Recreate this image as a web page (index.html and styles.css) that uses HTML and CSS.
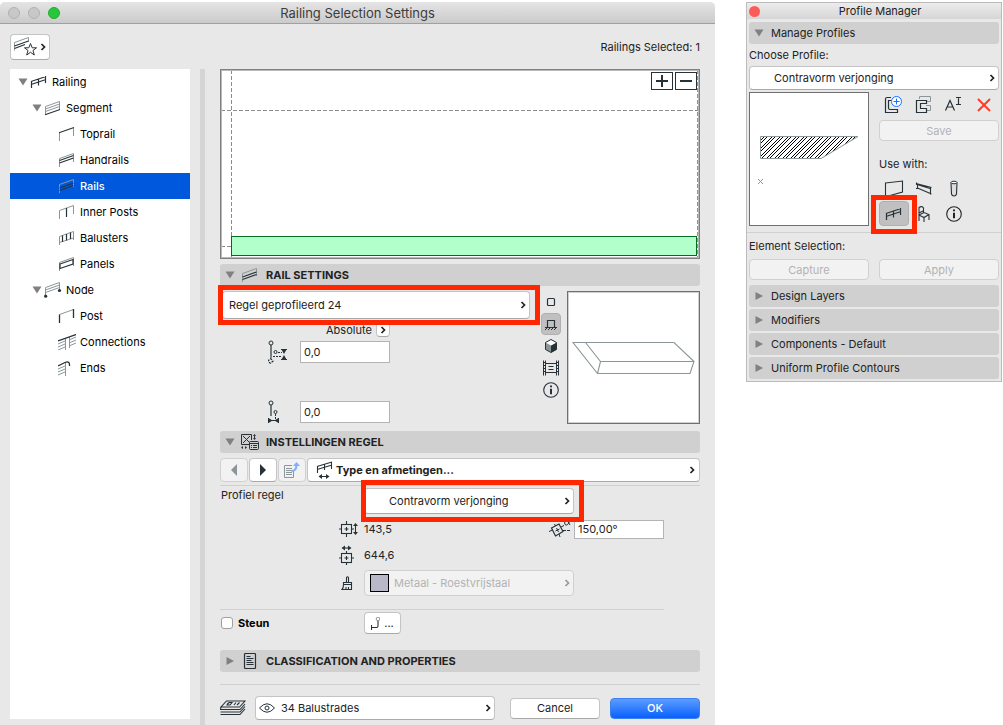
FILE: index.html
```html
<!DOCTYPE html>
<html lang="en">
<head>
  <meta charset="UTF-8">
  <meta name="viewport" content="width=device-width, initial-scale=1.0">
  <title>Railing Selection Settings</title>
  <link rel="stylesheet" href="styles.css">
</head>
<body>

  <!-- Shared icons -->
  <svg class="sprite" aria-hidden="true">
    <symbol id="chevron" viewBox="0 0 6 8"><path d="M1.5 1L4.5 4L1.5 7" fill="none" stroke="currentColor" stroke-width="1.7"/></symbol>
    <symbol id="down" viewBox="0 0 10 8"><path d="M0.5 0.5H9.5L5 7.5Z" fill="currentColor"/></symbol>
    <symbol id="right" viewBox="0 0 10 8"><path d="M1.5 0L9 4L1.5 8Z" fill="currentColor"/></symbol>
    <symbol id="railing" viewBox="0 0 18 16"><path d="M1.5 7V14M15.5 2V9M1 7.5L16 2.5M1 10.5L16 5.5M8.5 5V11.5" fill="none" stroke="currentColor" stroke-width="1.2"/></symbol>
    <symbol id="rails" viewBox="0 0 18 16"><path d="M1.5 15V6.5L15.5 1.5V9" fill="none" stroke="#8b9699"/><path d="M1.5 10L15.5 5M1.5 12.5L15.5 7.5" fill="none" stroke="#263238" stroke-width="1.2"/></symbol>
    <symbol id="info" viewBox="0 0 16 16"><circle cx="8" cy="8" r="7.3" fill="none" stroke="currentColor" stroke-width="1.1"/><path d="M8 3.5V5.3M8 6.7V12.3" stroke="currentColor" stroke-width="2"/></symbol>
  </svg>

  <div class="desktop">

    <main class="window">
      <header class="titlebar">
        <div class="lights"><span></span><span></span><span class="green"></span></div>
        <h1>Railing Selection Settings</h1>
      </header>

      <div class="toolbar">
        <button class="btn favorite" aria-label="Favorites">
          <svg width="23" height="20" viewBox="0 0 23 20"><path d="M0.5 13.5V5.5L14.5 0.5V5" fill="none" stroke="#8b9699"/><path d="M0.5 9L14.5 4M0.5 11.5L11 7.5" fill="none" stroke="#263238" stroke-width="1.2"/><path d="M16.500 6.500L18.200 10.800H22.500L19 13.500L20.300 18L16.500 15.300L12.700 18L14 13.500L10.500 10.800H14.800Z" fill="#fff" stroke="#263238"/></svg>
          <svg class="chev"><use href="#chevron"/></svg>
        </button>
        <span>Railings Selected: 1</span>
      </div>

      <div class="columns">
        <nav class="tree">
          <button class="node"><svg class="arrow"><use href="#down"/></svg><svg class="icon"><use href="#railing"/></svg>Railing</button>
          <button class="node level1"><svg class="arrow"><use href="#down"/></svg>
            <svg class="icon" viewBox="0 0 18 16"><path d="M1.5 15V6.5L15.5 1.500V10M1.5 9L15.5 4M1.5 11.5L15.5 6.500" fill="none" stroke="#8b9699"/><path d="M1 14.800L16 9.500" stroke="#263238" stroke-width="1.2"/></svg>Segment</button>
          <button class="node level2"><svg class="icon" viewBox="0 0 18 16"><path d="M1.5 15V7M15.5 2V10" stroke="#8b9699"/><path d="M1 6.800L16 1.500" stroke="#263238" stroke-width="1.2"/></svg>Toprail</button>
          <button class="node level2"><svg class="icon" viewBox="0 0 18 16"><path d="M1.5 15V6.500L15.5 1.500V10" fill="none" stroke="#8b9699"/><path d="M1.5 8.500L15.5 3.500M1.5 11L15.5 6" stroke="#263238" stroke-width="1.2"/></svg>Handrails</button>
          <button class="node level2 selected"><svg class="icon"><use href="#rails"/></svg>Rails</button>
          <button class="node level2"><svg class="icon" viewBox="0 0 18 16"><path d="M1.5 15V6.500L15.5 1.500V10" fill="none" stroke="#8b9699"/><path d="M8.500 4V13" stroke="#263238" stroke-width="1.2"/></svg>Inner Posts</button>
          <button class="node level2"><svg class="icon" viewBox="0 0 18 16"><path d="M1.5 15V6.500L15.5 1.500V10M1.5 12.500L15.5 8" fill="none" stroke="#8b9699"/><path d="M4.500 5.500V12M8.500 4V10.500M12.500 2.500V9" stroke="#263238" stroke-width="1.200"/></svg>Balusters</button>
          <button class="node level2"><svg class="icon" viewBox="0 0 18 16"><path d="M1.5 15V6.500L15.5 1.500V10" fill="none" stroke="#8b9699"/><path d="M2 8L15 3.500V8L2 12.500Z" fill="none" stroke="#263238" stroke-width="1.200"/></svg>Panels</button>
          <button class="node level1"><svg class="arrow"><use href="#down"/></svg>
            <svg class="icon" viewBox="0 0 18 16"><path d="M1.5 14V5.500L15.5 0.500V9M1.5 8L15.5 3M1.5 10.500L15.5 5.500" fill="none" stroke="#8b9699"/><circle cx="1.700" cy="14.200" r="1.600" fill="#263238"/><circle cx="15.500" cy="8.500" r="1.600" fill="#263238"/></svg>Node</button>
          <button class="node level2"><svg class="icon" viewBox="0 0 18 16"><path d="M1.5 6.500L15.5 1.500" stroke="#8b9699"/><path d="M1.5 15V6.500M15.5 1V10" stroke="#263238" stroke-width="1.300"/></svg>Post</button>
          <button class="node level2"><svg class="icon" viewBox="0 0 18 16"><path d="M7.500 4V16M11.500 3V14M0 10L7 7M0 13L7 10M0 16L7 13M11 6L18 3M11 9L18 6M11 12L18 9" stroke="#8b9699"/><path d="M0 7L18 0.500" stroke="#263238" stroke-width="1.200"/></svg>Connections</button>
          <button class="node level2"><svg class="icon" viewBox="0 0 18 16"><path d="M7.500 3V16M0 9L7 6M0 12L7 9M0 15L7 12" stroke="#8b9699"/><path d="M0 6L7 2.500Q12 0.500 11.500 6" fill="none" stroke="#263238" stroke-width="1.300"/></svg>Ends</button>
        </nav>

        <div class="splitter"></div>

        <div class="content">
          <div class="canvas">
            <svg class="plan">
              <line class="dash" x1="10.5" y1="0" x2="10.5" y2="100%"/>
              <line class="dash" x1="0" y1="40.5" x2="100%" y2="40.5"/>
              <line class="dash" x1="99.7%" y1="0" x2="99.7%" y2="100%"/>
              <line class="dash" x1="0" y1="176.5" x2="10" y2="176.5"/>
              <rect class="rail" x="10.5" y="166.5"/>
            </svg>
            <div class="zoom">
              <button aria-label="Zoom in"><svg viewBox="0 0 12 12"><path d="M0 6H12M6 0V12" stroke="#263238" stroke-width="2"/></svg></button>
              <button aria-label="Zoom out"><svg viewBox="0 0 12 12"><path d="M0 6H12" stroke="#263238" stroke-width="2"/></svg></button>
            </div>
          </div>

          <button class="section"><svg class="arrow"><use href="#down"/></svg><svg class="icon"><use href="#rails"/></svg>RAIL SETTINGS</button>

          <div class="rail-settings">
            <div class="fields">
              <div class="marked">
                <div class="combo tall">
                  <select aria-label="Rail type"><option>Regel geprofileerd 24</option></select>
                  <svg class="chev"><use href="#chevron"/></svg>
                </div>
              </div>
              <div class="absolute-row">Absolute <button class="btn mini" aria-label="Absolute or relative"><svg class="chev"><use href="#chevron"/></svg></button></div>
              <label class="offset">
                <svg width="20" height="24" viewBox="0 0 20 24"><g fill="none" stroke="#263238"><circle cx="3" cy="3" r="2"/><path d="M3 5V16" stroke-width="1.200"/><circle cx="7.500" cy="12" r="1.500"/><path d="M10 12.500H14M5 16.500H14M3 16V18" stroke-dasharray="2 1"/><path d="M13 9.500H19M13 19.500H19"/><path d="M2.500 18.500L5 21L2.500 23.500L0 21Z" stroke-width="1.300" stroke-dasharray="2 1.500"/></g><path d="M13.500 9.500H18.500L16 14ZM13.500 19.500H18.500L16 15Z" fill="#263238"/></svg>
                <input type="text" value="0,0" aria-label="Vertical offset">
              </label>
              <label class="offset second">
                <svg width="20" height="24" viewBox="0 0 20 24"><g fill="none" stroke="#263238"><circle cx="3" cy="3" r="2"/><path d="M3 5V16" stroke-width="1.200"/><circle cx="7.500" cy="12" r="1.500"/><path d="M7.500 14V19" stroke-dasharray="2 1"/><path d="M0.500 18V23M10.500 18V23M1 20.500H10"/></g><path d="M0.500 18V23L4.500 20.500ZM10.500 18V23L6.500 20.500Z" fill="#263238"/></svg>
                <input type="text" value="0,0" aria-label="Horizontal offset">
              </label>
            </div>
            <div class="views">
              <button aria-label="2D view"><svg viewBox="0 0 16 16"><rect x="4.500" y="4.500" width="7" height="7" rx="1" fill="none" stroke="currentColor" stroke-width="1.200"/></svg></button>
              <button class="on" aria-label="Front view"><svg viewBox="0 0 16 16"><path d="M4.500 11V4.500H11.500V11M2 11.500H14" fill="none" stroke="currentColor" stroke-width="1.200"/><path d="M2 14L4 12M5 14L7 12M8 14L10 12M11 14L13 12" stroke="currentColor"/></svg></button>
              <button aria-label="3D view"><svg viewBox="0 0 16 16"><path d="M8 1.500L13.500 4.500V11.500L8 14.500L2.500 11.500V4.500Z" fill="#8b9699"/><path d="M8 7.500L13.500 4.500V11.500L8 14.500Z" fill="#263238"/><path d="M8 1.500L13.500 4.500L8 7.500L2.500 4.500Z" fill="#fff"/><path d="M8 1.500L13.500 4.500V11.500L8 14.500L2.500 11.500V4.500Z" fill="none" stroke="#263238"/></svg></button>
              <button aria-label="Picture"><svg viewBox="0 0 16 16"><path d="M0.500 0.500V15.500M2.500 0.500V15.500M13.500 0.500V15.500M15.500 0.500V15.500M2.500 3.500H13.500M2.500 12.500H13.500M5.500 6.500H10.500M5.500 9.500H10.500M0 2.500H3M0 5.500H3M0 8.500H3M0 11.500H3M13 2.500H16M13 5.500H16M13 8.500H16M13 11.500H16" fill="none" stroke="currentColor"/></svg></button>
              <button aria-label="Info"><svg><use href="#info"/></svg></button>
            </div>
            <div class="preview3d">
              <svg viewBox="0 0 129 129"><path d="M4 49.500H105L125 68.500L121 80.500H28.500ZM125 68.500H31.500L16.500 49.500M31.500 68.500L28.500 80.500" fill="none" stroke="#8b9699" stroke-width="1.100"/></svg>
            </div>
          </div>

          <button class="section"><svg class="arrow"><use href="#down"/></svg>
            <svg class="icon" viewBox="0 0 18 16"><g fill="none" stroke="#263238"><path d="M8 10.500H0.500V0.500H10.500V6M2 2L9 9M9 2L2 9M13.500 1V5"/><rect x="8.500" y="7.500" width="9" height="8" rx="1" fill="#d0d0d0"/><path d="M8.500 9.500H17.500M10 11.500H11M12 11.500H16M10 13.500H11M12 13.500H16"/></g><path d="M12 2L13.500 0L15 2ZM12 4L13.500 6L15 4ZM2 12V15L0 13.500ZM4 12V15L6 13.500Z" fill="#263238"/></svg>INSTELLINGEN REGEL</button>

          <div class="pager">
            <button class="btn dim" aria-label="Previous"><svg width="6" height="12" viewBox="0 0 6 12"><path d="M6 0V12L0 6Z" fill="#8b9699"/></svg></button>
            <button class="btn" aria-label="Next"><svg width="6" height="12" viewBox="0 0 6 12"><path d="M0 0V12L6 6Z" fill="#263238"/></svg></button>
            <button class="btn dim" aria-label="Open page"><svg width="16" height="16" viewBox="0 0 16 16"><path d="M8 3.500H0.500V15.500H9.500V9M2 6.500H8M2 8.500H8M2 10.500H8M2 12.500H8" fill="none" stroke="#8b9699"/><path d="M7.500 9Q12.500 9 12.500 3" fill="none" stroke="#7fb0ff" stroke-width="2"/><path d="M9 4L12.500 0L16 4Z" fill="#7fb0ff"/></svg></button>
            <button class="btn type"><svg width="18" height="18" viewBox="0 0 18 18"><path d="M1.500 5.500V12M15.500 1V8M1 5.500L16 1M1 8.500L16 4M8.500 3V9M3 15.500H13" fill="none" stroke="#263238" stroke-width="1.100"/><path d="M6 13V18L2.500 15.500ZM10 13V18L13.500 15.500Z" fill="#263238"/></svg>Type en afmetingen...<svg class="chev"><use href="#chevron"/></svg></button>
          </div>

          <div class="profile">
            <label class="name" for="profiel">Profiel regel</label>
            <div class="marked inner">
              <div class="combo indented">
                <select id="profiel"><option>Contravorm verjonging</option></select>
                <svg class="chev"><use href="#chevron"/></svg>
              </div>
            </div>

            <svg class="dim-icon" width="20" height="16" viewBox="0 0 20 16"><g fill="none" stroke="#263238" stroke-width="1.100"><rect x="2.500" y="3.500" width="10" height="9"/><path d="M7.500 0V3M7.500 13V16M0 8H2M13 8H15M5.500 8H9.500M7.500 6V10"/><path d="M16.500 4V12"/></g><path d="M14 5L16.500 2L19 5ZM14 11L16.500 14L19 11Z" fill="#263238"/></svg>
            <div class="value">143,5
              <svg width="22" height="18" viewBox="0 0 22 18"><g fill="none" stroke="#263238"><path d="M2.500 8L10 4L14 11.500L6.500 16Z" stroke-width="1.200"/><path d="M0 11.500L4 9.800M12 7L15 5.500M5.500 4L6.500 6M10 14L11 17M6.500 11L10.500 9M7.500 8L9.500 12"/><path d="M14 10.500H22" stroke-dasharray="3 1"/><path d="M21 0Q19 6 16.500 5Q14.500 3 16.500 1Q19 0 21 5"/></g></svg>
            </div>
            <input class="angle" type="text" value="150,00°" aria-label="Angle">

            <svg class="dim-icon" width="16" height="20" viewBox="0 0 16 20"><g fill="none" stroke="#263238" stroke-width="1.100"><rect x="2.500" y="8.500" width="10" height="9"/><path d="M7.500 6V8M7.500 18V20M0 13H2M13 13H15M5.500 13H9.500M7.500 11V15"/><path d="M4 3H11"/></g><path d="M6 0.500V5.500L2.500 3ZM9 0.500V5.500L12.500 3Z" fill="#263238"/></svg>
            <div class="value">644,6</div>

            <svg class="dim-icon brush" width="12" height="14" viewBox="0 0 12 14"><path d="M5.500 6V1.500Q6.500 0 7.500 1.500V6M2.500 9V6.500H10.500V9M2.500 8.500H10.500V13.500H1Q2.500 12 2.500 8.500M5 13V11M7.500 13V11" fill="none" stroke="#263238" stroke-width="1.100"/></svg>
            <div class="combo material">
              <span class="swatch"></span>
              <select disabled aria-label="Material"><option>Metaal - Roestvrijstaal</option></select>
              <svg class="chev"><use href="#chevron"/></svg>
            </div>
          </div>

          <div class="support">
            <label><input type="checkbox">Steun</label>
            <button class="btn" aria-label="Support settings"><svg width="9" height="13" viewBox="0 0 9 13"><circle cx="7" cy="2" r="1.800" fill="none" stroke="#8b9699"/><path d="M7 4V9Q7 10.500 5.500 10.500H0.500M0.500 8V13" fill="none" stroke="#263238" stroke-width="1.100"/></svg>...</button>
          </div>

          <button class="section"><svg class="arrow"><use href="#right"/></svg>
            <svg class="icon" viewBox="0 0 18 16"><rect x="3.500" y="0.500" width="11" height="15" rx="1" fill="none" stroke="#263238" stroke-width="1.200"/><path d="M5.500 3.500H9.500M5.500 5.500H12.500M5.500 7.500H10.500M5.500 9.500H12.500M5.500 11.500H12.500" stroke="#263238"/></svg>CLASSIFICATION AND PROPERTIES</button>

          <footer class="footer">
            <svg width="26" height="16" viewBox="0 0 26 16"><path d="M6.500 1H25L19.500 7H1ZM1 7L0.500 9.500H20L25 4M0.500 12H20L25 6.500M0.500 14.500H20L25 9M7 4.500L9 2.500H12L10 5H6.500M14 5L16 2.500M17 5L19.500 2.500" fill="none" stroke="#263238" stroke-width="1.100"/></svg>
            <div class="combo layer">
              <svg class="eye" width="16" height="10" viewBox="0 0 16 10"><path d="M0.500 5Q8-3.500 15.500 5Q8 13.500 0.500 5Z" fill="none" stroke="#263238"/><circle cx="8" cy="5" r="2" fill="none" stroke="#263238"/></svg>
              <select aria-label="Layer"><option>34 Balustrades</option></select>
              <svg class="chev"><use href="#chevron"/></svg>
            </div>
            <div class="answers">
              <button class="btn">Cancel</button>
              <button class="btn primary">OK</button>
            </div>
          </footer>
        </div>
      </div>
    </main>

    <aside class="palette">
      <header><span class="close"></span><h2>Profile Manager</h2></header>
      <button class="section"><svg class="arrow"><use href="#down"/></svg>Manage Profiles</button>
      <label class="caption" for="choose">Choose Profile:</label>
      <div class="combo indented">
        <select id="choose"><option>Contravorm verjonging</option></select>
        <svg class="chev"><use href="#chevron"/></svg>
      </div>

      <div class="manage">
        <div class="section-view">
          <svg viewBox="0 0 116 130">
            <defs>
              <pattern id="hatch" width="8" height="8" patternUnits="userSpaceOnUse"><path d="M-1 1L1-1M-1 9L9-1M7 9L9 7M-1 4L4-1M2 9L9 2" stroke="#000"/></pattern>
            </defs>
            <path d="M9.500 42.500H107L70 64.500H9.500Z" fill="url(#hatch)" stroke="#8b9699"/>
            <path d="M7 85L12 90M12 85L7 90" stroke="#8b9699"/>
          </svg>
        </div>
        <div class="actions">
          <div class="tools">
            <button aria-label="New profile"><svg viewBox="0 0 20 20"><path d="M8 2.500H4Q2.500 2.500 2.500 4V17.500H14.500V14.500H7Q5.500 14.500 5.500 13V5.500H8" fill="none" stroke="#263238" stroke-width="1.200"/><circle cx="13.500" cy="6.500" r="5" fill="#fff" stroke="#1a6dff"/><path d="M10.500 6.500H16.500M13.500 3.500V9.500" stroke="#1a6dff"/></svg></button>
            <button aria-label="Duplicate profile"><svg viewBox="0 0 20 20"><path d="M6.500 4V1.500H17.500V6.500H13M13 10.500H17.500V15.500H14" fill="none" stroke="#8b9699"/><path d="M13.500 5.500V8.500H7.500V13.500H13.500V17.500H3.500V5.500Z" fill="none" stroke="#263238" stroke-width="1.200"/></svg></button>
            <button aria-label="Rename profile"><svg viewBox="0 0 20 20"><path d="M1.500 15.500L6 5.500L10.500 15.500M3 12H9M12 2.500H14L14.500 3L15 2.500H17M14.500 3V9M12 9.500H17" fill="none" stroke="#263238" stroke-width="1.200"/></svg></button>
            <button aria-label="Delete profile"><svg viewBox="0 0 20 20"><path d="M4 4L16 16M16 4L4 16" stroke="#ff3b24" stroke-width="2"/></svg></button>
          </div>
          <button class="btn" disabled>Save</button>
          <p>Use with:</p>
          <div class="uses">
            <button aria-label="Wall"><svg viewBox="0 0 20 20"><path d="M1.500 4L18.500 2V13L6 16.500H1.500Z" fill="none" stroke="#263238" stroke-width="1.100"/></svg></button>
            <button aria-label="Beam"><svg viewBox="0 0 20 20"><path d="M2 4.500L17.500 8.500M3.500 9L17.500 15M2.500 3.500V6M3.500 5V10M2 9.500H4M16.500 8V15.500M3 5.500L16 9.500" fill="none" stroke="#263238" stroke-width="1.100"/></svg></button>
            <button aria-label="Column"><svg viewBox="0 0 20 20"><path d="M7 3.500L7.500 15Q8 17 10 17T12.500 15L13 3.500" fill="#ddd" stroke="#263238" stroke-width="1.100"/><ellipse cx="10" cy="3.500" rx="3" ry="1.300" fill="#fff" stroke="#263238"/></svg></button>
            <button class="on marked small" aria-label="Railing"><svg viewBox="-1 -2 20 20"><path d="M1.500 7V14M15.500 2V9M1 7.500L16 2.500M1 10.500L16 5.500M8.500 5V11.500" fill="none" stroke="#263238" stroke-width="1.200"/></svg></button>
            <button aria-label="Object"><svg viewBox="0 0 20 20"><path d="M5 17V3.500Q8 1.500 9.500 4V8.500M5 11L10 8.500L15 10.500V16M5 11L10 13.500L15 10.500M10 13.500V18M5 9L9 7" fill="none" stroke="#263238" stroke-width="1.100"/></svg></button>
            <button aria-label="Profile info"><svg viewBox="0 0 20 20"><use href="#info" x="2" y="2" width="16" height="16"/></svg></button>
          </div>
        </div>
      </div>

      <div class="selection">
        <p>Element Selection:</p>
        <div class="pair">
          <button class="btn" disabled>Capture</button>
          <button class="btn" disabled>Apply</button>
        </div>
      </div>
      <div class="closed">
        <button class="section"><svg class="arrow"><use href="#right"/></svg>Design Layers</button>
        <button class="section"><svg class="arrow"><use href="#right"/></svg>Modifiers</button>
        <button class="section"><svg class="arrow"><use href="#right"/></svg>Components - Default</button>
        <button class="section"><svg class="arrow"><use href="#right"/></svg>Uniform Profile Contours</button>
      </div>
    </aside>

  </div>

</body>
</html>
```
FILE: styles.css
```css
* {
  box-sizing: border-box;
}
body {
  margin: 0;
  background: #fff;
  color: #222;
  font-family: Inter, "Liberation Sans", sans-serif;
  font-size: 11px;
  line-height: 14px;
}
button, input, select {
  font: inherit;
  color: inherit;
  margin: 0;
}
button {
  display: flex;
  align-items: center;
  border: none;
  padding: 0;
  background: none;
  text-align: left;
}
svg {
  display: block;
  flex: none;
}
h1, h2, p {
  margin: 0;
  font-weight: normal;
}
.sprite {
  position: absolute;
  width: 0;
  height: 0;
}
.desktop {
  display: flex;
  align-items: flex-start;
  gap: 31px;
  padding: 2px 1px 0 0;
}

/* Settings window */
.window {
  flex: 1;
  display: flex;
  flex-direction: column;
  min-height: calc(100vh - 2px);
  background: #e8e8e8;
  border-radius: 5px 5px 0 0;
}
.titlebar {
  display: grid;
  grid-template-columns: 60px 1fr 60px;
  align-items: center;
  height: 22px;
  background: linear-gradient(#e4e4e4, #cbcbcb);
  border-bottom: 1px solid #a0a0a0;
  border-radius: 5px 5px 0 0;
}
.titlebar h1 {
  font-size: 13px;
  text-align: center;
  color: #3c3c3c;
}
.lights {
  display: flex;
  gap: 8px;
  padding-left: 8px;
}
.lights span {
  width: 12px;
  height: 12px;
  border: 1px solid #b1b1b1;
  border-radius: 50%;
  background: #c8c8c8;
}
.lights .green {
  background: #28c73b;
  border-color: #1fae30;
}
.toolbar {
  display: flex;
  justify-content: space-between;
  align-items: center;
  height: 45px;
  padding: 0 15px 0 10px;
}
.columns {
  flex: 1;
  display: grid;
  grid-template-columns: 180px 5px 1fr;
  column-gap: 10px;
  padding-left: 10px;
}
.splitter {
  background: #d5d5d5;
}
.content {
  padding: 0 15px 6px 5px;
}

/* Buttons and boxes */
.btn {
  justify-content: center;
  background: #fff;
  border: 1px solid #c4c4c4;
  border-bottom-color: #a9a9a9;
  border-radius: 4px;
}
.btn:disabled, .btn.dim {
  background: #f2f2f2;
  border-color: #d0d0d0;
  color: #b2b2b2;
}
.favorite {
  width: 40px;
  height: 26px;
  gap: 3px;
}
.chev {
  width: 6px;
  height: 8px;
}
.arrow {
  width: 10px;
  height: 8px;
  color: #808080;
}
.icon {
  width: 18px;
  height: 16px;
}
input[type="text"] {
  width: 90px;
  height: 22px;
  padding: 0 3px;
  border: 1px solid #b4b4b4;
  background: #fff;
}
.combo {
  position: relative;
  height: 24px;
}
.combo select {
  appearance: none;
  width: 100%;
  height: 100%;
  padding: 0 20px 0 6px;
  background: #fff;
  border: 1px solid #c4c4c4;
  border-bottom-color: #a9a9a9;
  border-radius: 4px;
}
.combo.tall {
  height: 28px;
}
.combo.indented select {
  padding-left: 24px;
}
.combo .chev {
  position: absolute;
  right: 4px;
  top: calc(50% - 4px);
}
.marked {
  position: relative;
}
.marked::after {
  content: "";
  position: absolute;
  inset: -6px -10px -6px -4px;
  border: 5px solid #ff2600;
  pointer-events: none;
}

/* Tree */
.tree {
  margin-bottom: 7px;
  background: #fff;
}
.node {
  width: 100%;
  height: 26px;
  padding-left: 8px;
  color: #000;
}
.node .arrow {
  margin-right: 2px;
}
.node .icon {
  margin-right: 4px;
  color: #263238;
}
.level1 {
  padding-left: 22px;
}
.level2 {
  padding-left: 48px;
}
.node.selected {
  background: #0058dc;
  color: #fff;
  font-weight: 500;
}

/* Section headers */
.section {
  width: 100%;
  height: 22px;
  padding-left: 5px;
  background: #d0d0d0;
  border-radius: 3px;
}
.content .section {
  font-weight: 700;
}
.section .icon {
  margin: 0 7px 0 6px;
}

/* Plan */
.canvas {
  position: relative;
  height: 190px;
  margin-bottom: 5px;
  border: 1px solid #808080;
  outline: 1px solid #b9b9b9;
  outline-offset: -2px;
  background: #fff;
}
.plan {
  width: 100%;
  height: 100%;
}
.dash {
  stroke: #8c8c8c;
  stroke-dasharray: 4 2;
}
.rail {
  width: calc(100% - 13px);
  height: 19px;
  fill: #b2ffcc;
  stroke: #006d20;
}
.zoom {
  position: absolute;
  top: 2px;
  right: 2px;
  display: flex;
  gap: 2px;
}
.zoom button {
  justify-content: center;
  width: 22px;
  height: 18px;
  background: #fff;
  border: 1px solid #263238;
}
.zoom svg {
  width: 12px;
  height: 12px;
}

/* Rail settings */
.rail-settings {
  display: flex;
  padding: 5px 0 7px;
}
.fields {
  flex: 1;
  padding-left: 2px;
}
.fields .marked {
  margin-right: 11px;
}
.absolute-row {
  display: flex;
  align-items: center;
  gap: 4px;
  margin: 3px 0 4px;
  padding-left: 104px;
}
.mini {
  width: 14px;
  height: 15px;
}
.offset {
  display: flex;
  align-items: center;
  gap: 12px;
  height: 22px;
  padding-left: 46px;
}
.second {
  margin-top: 38px;
}
.views button {
  justify-content: center;
  width: 20px;
  height: 22px;
  color: #263238;
}
.views button.on, .uses .on {
  background: #c0c0c0;
  border: 1px solid #b0b0b0;
  border-radius: 4px;
}
.views svg {
  width: 16px;
  height: 16px;
}
.preview3d {
  width: 133px;
  height: 133px;
  margin-left: 6px;
  border: 1px solid #707070;
  outline: 1px solid #d0d0d0;
  outline-offset: -2px;
  padding: 1px;
  background: #fff;
}

/* Regel settings */
.pager {
  display: flex;
  gap: 1px;
  padding: 5px 0 3px;
  border-bottom: 1px solid #d0d0d0;
}
.pager .btn {
  width: 28px;
  height: 24px;
}
.pager .type {
  flex: 1;
  justify-content: flex-start;
  gap: 2px;
  padding: 0 4px 0 8px;
  font-weight: 700;
}
.type .chev {
  margin-left: auto;
}
.profile {
  display: grid;
  grid-template-columns: 118px 26px 210px 90px;
  grid-template-rows: 28px 26px 25px 32px;
  align-items: center;
  margin-right: 36px;
  padding: 2px 0 10px;
  border-bottom: 1px solid #d0d0d0;
}
.profile .name {
  align-self: start;
  padding-left: 1px;
}
.profile .marked {
  grid-column: 3 / 4;
  align-self: start;
}
.profile .combo {
  height: 26px;
}
.inner::after {
  inset: -8px -10px -8px -3px;
}
.dim-icon {
  grid-column: 2;
  margin-left: 1px;
}
.brush {
  margin-left: 3px;
}
.value {
  display: flex;
  align-items: center;
  justify-content: space-between;
  padding-right: 3px;
}
.profile .angle {
  height: 19px;
}
.profile .combo.material select {
  padding-left: 29px;
  background: #f2f2f2;
  border-color: #d0d0d0;
  color: #b2b2b2;
  opacity: 1;
}
.material .chev {
  color: #999;
}
.swatch {
  position: absolute;
  left: 6px;
  top: 4px;
  width: 19px;
  height: 18px;
  background: #b9b8c8;
  border: 1px solid #000;
}
.support {
  display: grid;
  grid-template-columns: 144px 37px;
  align-items: center;
  padding: 2px 0 16px;
}
.support label {
  display: flex;
  align-items: center;
  gap: 5px;
  padding-left: 1px;
  color: #000;
  font-weight: 700;
}
.support input {
  appearance: none;
  width: 12px;
  height: 12px;
  background: #fff;
  border: 1px solid #a0a0a0;
  border-radius: 3px;
}
.support .btn {
  height: 22px;
  gap: 4px;
}
.footer {
  display: flex;
  align-items: center;
  margin-top: 12px;
  padding-top: 11px;
  border-top: 1px solid #d0d0d0;
}
.layer {
  flex: 1;
  margin: 0 15px 0 9px;
}
.footer .layer select {
  padding-left: 25px;
}
.eye {
  position: absolute;
  left: 4px;
  top: 7px;
}
.answers {
  display: flex;
  gap: 10px;
}
.answers .btn {
  width: 90px;
  height: 21px;
}
.answers .primary {
  background: linear-gradient(#5b9dff, #0a60ff);
  border-color: #3c82f0;
  color: #fff;
  font-weight: 500;
}

/* Profile palette */
.palette {
  flex: none;
  width: 256px;
  padding: 0 2px 2px;
  background: #e8e8e8;
  border: 1px solid #bcbcbc;
}
.palette header {
  display: grid;
  grid-template-columns: 12px 1fr;
  align-items: center;
  height: 16px;
  margin: 0 -2px 3px;
  padding: 0 2px;
  background: linear-gradient(#ececec, #d6d6d6);
}
.palette h2 {
  font-size: 11px;
  text-align: center;
}
.close {
  width: 11px;
  height: 11px;
  border-radius: 50%;
  background: #fc5b57;
}
.palette .arrow {
  margin-right: 7px;
}
.caption {
  display: block;
  padding: 4px 0;
}
.manage {
  display: flex;
  gap: 10px;
  margin-top: 2px;
}
.section-view {
  flex: 1;
  height: 134px;
  padding: 1px;
  border: 1px solid #707070;
  background: #fff;
}
.actions {
  width: 120px;
}
.tools {
  display: flex;
  justify-content: space-between;
  padding: 3px 5px 5px 4px;
}
.tools svg, .uses svg {
  width: 20px;
  height: 20px;
}
.actions .btn, .pair .btn {
  width: 100%;
  height: 21px;
}
.actions p {
  margin: 16px 0 5px;
}
.uses {
  display: grid;
  grid-template-columns: 30px 30px 30px;
}
.uses button {
  justify-content: center;
  width: 30px;
  height: 25px;
}
.small::after {
  inset: -7px -9px -9px;
}
.selection {
  margin: 6px -2px 0;
  padding: 6px 2px 5px;
  border-top: 1px solid #d0d0d0;
}
.pair {
  display: grid;
  grid-template-columns: 1fr 1fr;
  gap: 10px;
  margin-top: 6px;
}
.closed {
  display: grid;
  gap: 2px;
}
```
